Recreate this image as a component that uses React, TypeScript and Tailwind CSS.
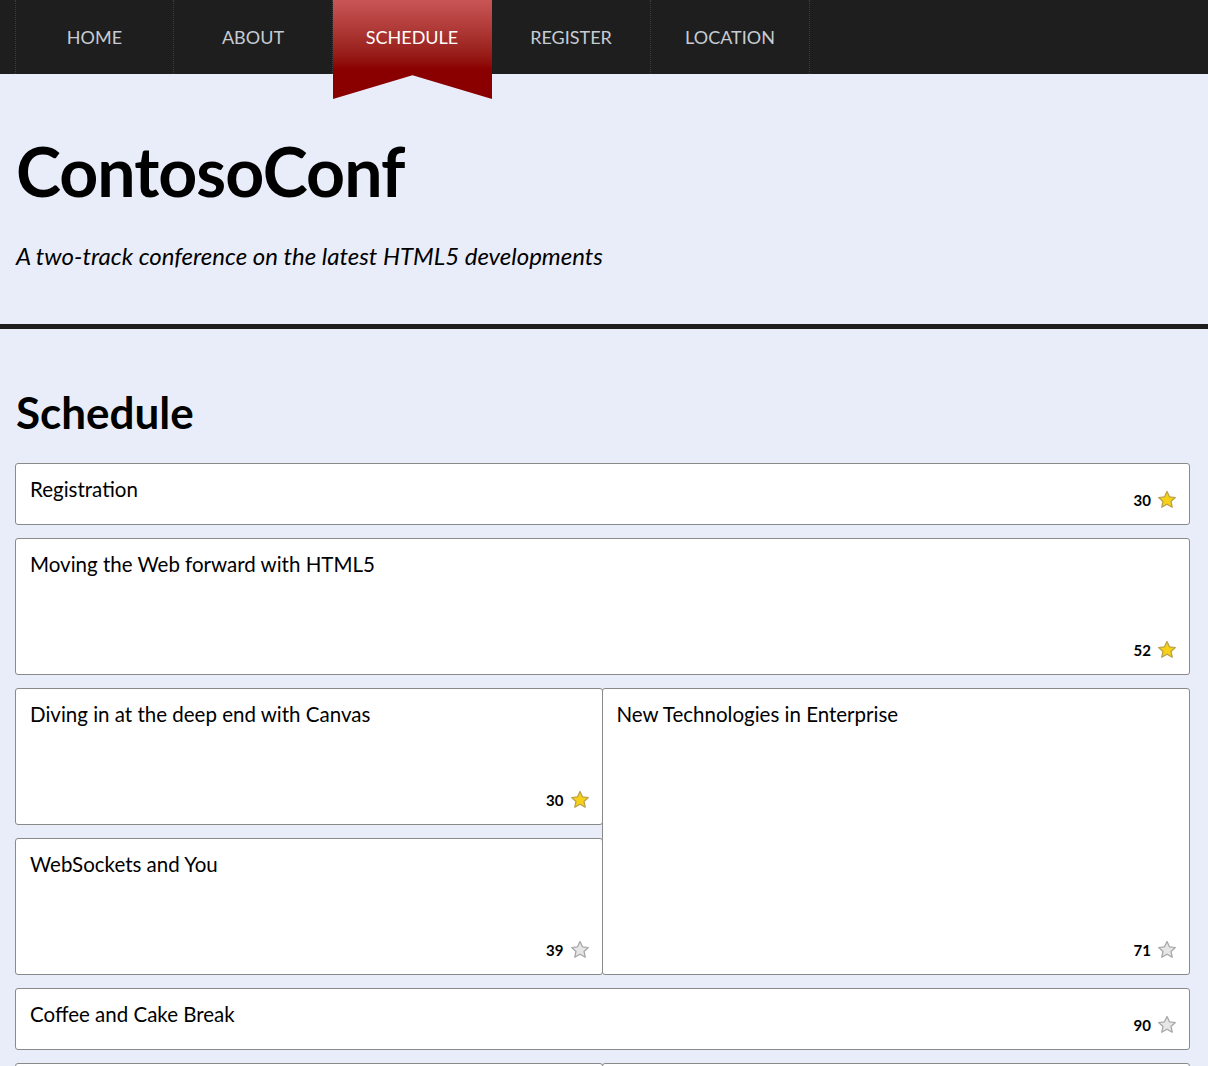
import React from "react";

interface Session {
  id: number;
  title: string;
  stars: number;
  starred: boolean;
  size: "short" | "normal" | "tall";
  span: "full" | "left" | "right";
}

const sessions: Session[] = [
  { id: 1, title: "Registration", stars: 30, starred: true, size: "short", span: "full" },
  { id: 2, title: "Moving the Web forward with HTML5", stars: 52, starred: true, size: "normal", span: "full" },
  { id: 3, title: "Diving in at the deep end with Canvas", stars: 30, starred: true, size: "normal", span: "left" },
  { id: 4, title: "New Technologies in Enterprise", stars: 71, starred: false, size: "tall", span: "right" },
  { id: 5, title: "WebSockets and You", stars: 39, starred: false, size: "normal", span: "left" },
  { id: 6, title: "Coffee and Cake Break", stars: 90, starred: false, size: "short", span: "full" },
  { id: 7, title: "Making Games with HTML5", stars: 44, starred: false, size: "normal", span: "left" },
  { id: 8, title: "Mobile First Design", stars: 27, starred: false, size: "normal", span: "right" },
];

const navItems = ["Home", "About", "Schedule", "Register", "Location"];

function Star({ on }: { on: boolean }) {
  return (
    <svg width="20" height="20" viewBox="0 0 24 24">
      <path
        d="M12 1.8l3 6.4 7 .8-5.2 4.7 1.5 7L12 17.1l-6.3 3.6 1.5-7L2 9l7-.8z"
        fill={on ? "#f7d117" : "#e6e6e6"}
        stroke={on ? "#b9a04a" : "#a6a6a6"}
        strokeWidth="1.5"
        strokeLinejoin="round"
      />
    </svg>
  );
}

function SessionCard({ s }: { s: Session }) {
  const height =
    s.size === "short" ? "h-[62px]" : s.size === "tall" ? "h-[287px] row-span-2" : "h-[137px]";
  const col =
    s.span === "full" ? "col-span-2" : s.span === "left" ? "col-start-1" : "col-start-2 -ml-px";
  return (
    <div
      className={`${height} ${col} relative bg-white border border-[#8a8a8a] rounded-[3px] pl-[14px] pr-[13px] pt-[13px]`}
    >
      <div className="text-[20.5px] leading-[24px] text-black">{s.title}</div>
      <div className="absolute right-[12px] bottom-[13px] flex items-center gap-[6px]">
        <span className="text-[15px] font-bold text-black">{s.stars}</span>
        <Star on={s.starred} />
      </div>
    </div>
  );
}

export default function App() {
  return (
    <div className="min-h-screen bg-[#e9edf9] font-['Lato',sans-serif]">
      <nav className="h-[74px] bg-[#1e1e1e] pl-[15px]">
        <ul className="flex h-full">
          {navItems.map((item, i) => {
            const active = item === "Schedule";
            return (
              <li
                key={item}
                className={`relative w-[159px] h-[74px] border-r border-dotted border-[#3c3c3c] ${
                  i === 0 ? "border-l" : ""
                }`}
              >
                {active && (
                  <div className="absolute left-0 top-0 w-[159px] h-[99px] bg-gradient-to-b from-[#c95656] to-[#8a0000] to-[70%] [clip-path:polygon(0_0,100%_0,100%_100%,50%_76%,0_100%)]" />
                )}
                <a
                  href="#"
                  className={`relative flex h-[74px] items-center justify-center text-[18px] uppercase ${
                    active ? "text-white" : "text-[#c6ccd3]"
                  }`}
                >
                  {item}
                </a>
              </li>
            );
          })}
        </ul>
      </nav>

      <header className="px-[16px] pt-[57px] pb-[53px]">
        <h1 className="text-[68px] font-bold leading-[80px] text-black tracking-[-1px]">ContosoConf</h1>
        <p className="mt-[30px] text-[24px] leading-[30px] italic text-black">
          A two-track conference on the latest HTML5 developments
        </p>
      </header>

      <div className="h-[5px] bg-[#1e1e1e]" />

      <main className="pl-[15px] pr-[18px] pt-[57px] pb-10">
        <h2 className="text-[44px] font-bold leading-[52px] text-black pl-px mb-[25px]">Schedule</h2>
        <div className="grid grid-cols-2 gap-y-[13px]">
          {sessions.map((s) => (
            <SessionCard key={s.id} s={s} />
          ))}
        </div>
      </main>
    </div>
  );
}
